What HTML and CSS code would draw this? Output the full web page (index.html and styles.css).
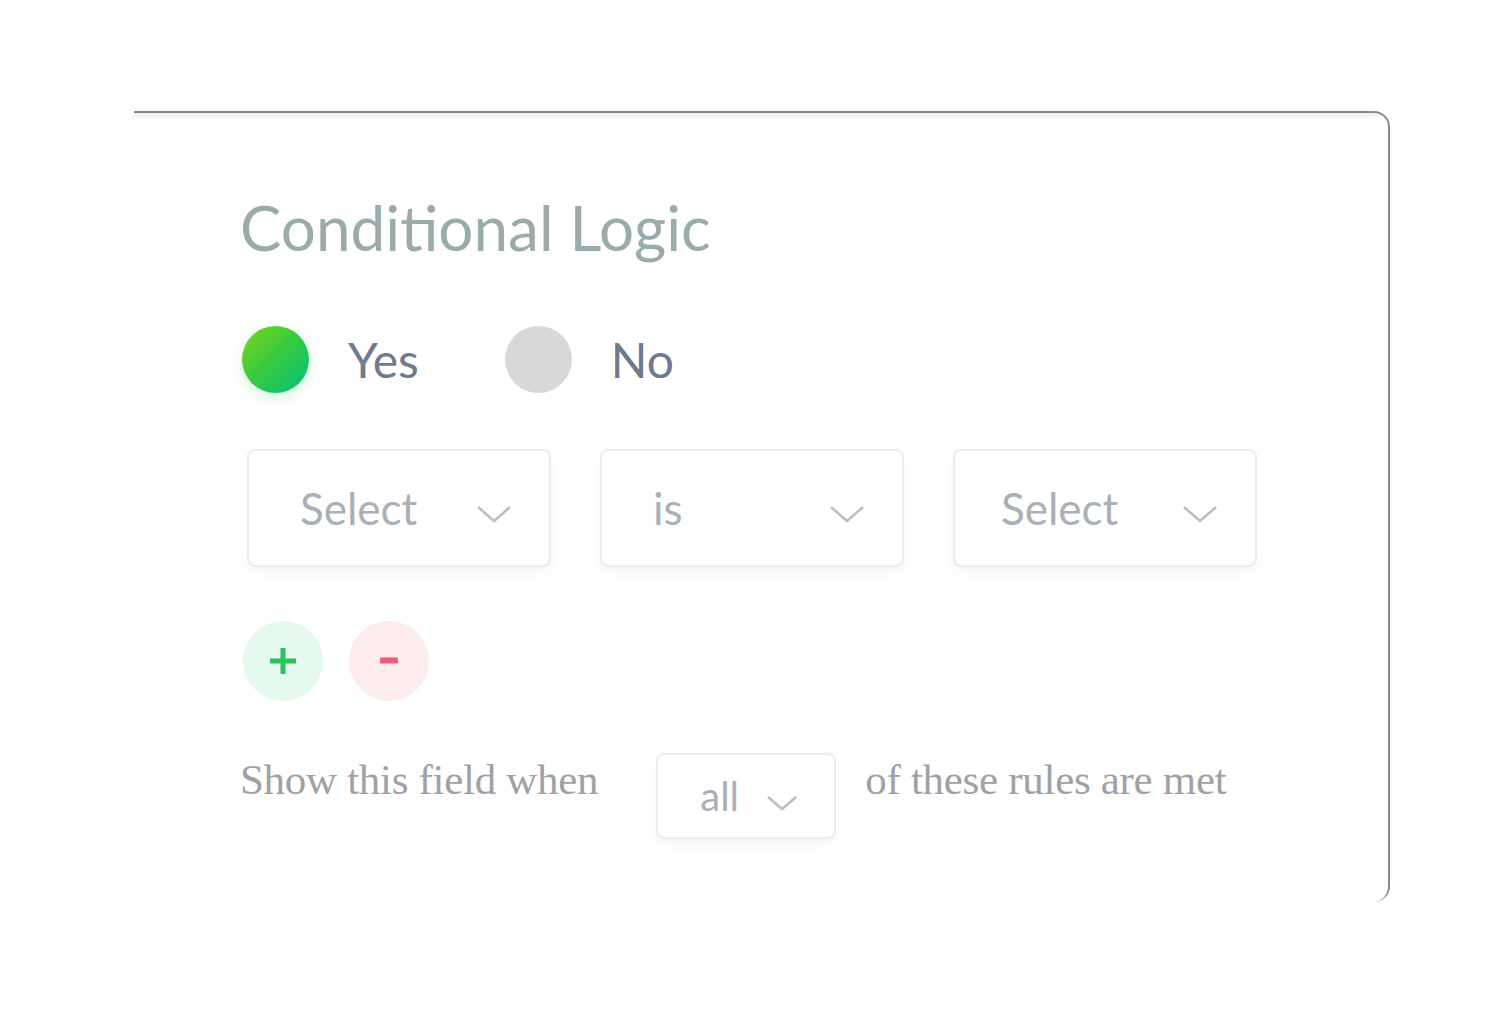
FILE: index.html
```html
<!DOCTYPE html>
<html lang="en">
<head>
    <meta charset="UTF-8">
    <meta name="viewport" content="width=device-width, initial-scale=1.0">
    <title>Conditional Logic</title>
    <link rel="stylesheet" href="styles.css">
</head>
<body>
    <div class="card">
        <h2 class="title">Conditional Logic</h2>

        <div class="radio-row">
            <label class="radio">
                <span class="dot dot-on"></span>
                <span class="radio-label">Yes</span>
            </label>
            <label class="radio">
                <span class="dot"></span>
                <span class="radio-label">No</span>
            </label>
        </div>

        <div class="rule-row">
            <div class="select">
                <span class="select-text">Select</span>
                <svg class="chevron" width="36" height="20" viewBox="0 0 36 20"><polyline points="2,3 18,17 34,3" fill="none" stroke="#b7bec5" stroke-width="2.5"/></svg>
            </div>
            <div class="select">
                <span class="select-text">is</span>
                <svg class="chevron" width="36" height="20" viewBox="0 0 36 20"><polyline points="2,3 18,17 34,3" fill="none" stroke="#b7bec5" stroke-width="2.5"/></svg>
            </div>
            <div class="select select-last">
                <span class="select-text">Select</span>
                <svg class="chevron" width="36" height="20" viewBox="0 0 36 20"><polyline points="2,3 18,17 34,3" fill="none" stroke="#b7bec5" stroke-width="2.5"/></svg>
            </div>
        </div>

        <div class="action-row">
            <button class="round add">
                <svg width="32" height="32" viewBox="0 0 32 32"><path d="M16 3v26M3 16h26" stroke="#27c35c" stroke-width="5"/></svg>
            </button>
            <button class="round remove">
                <svg width="18" height="8" viewBox="0 0 18 8"><rect x="0" y="0.5" width="18" height="6" rx="1" fill="#f05a73"/></svg>
            </button>
        </div>

        <div class="match-row">
            <span class="match-text">Show this field when</span>
            <div class="select select-small">
                <span class="select-text">all</span>
                <svg class="chevron" width="32" height="18" viewBox="0 0 32 18"><polyline points="2,3 16,15 30,3" fill="none" stroke="#b7bec5" stroke-width="2.5"/></svg>
            </div>
            <span class="match-text">of these rules are met</span>
        </div>
    </div>
</body>
</html>
```

FILE: styles.css
```css
body {
    margin: 0;
    background: white;
    font-family: Lato, "Open Sans", sans-serif;
}
.card {
    box-sizing: border-box;
    width: 1256px;
    margin: 111px 0 0 134px;
    padding: 83px 0 63px 106px;
    border-top: 2px solid #8a8a8a;
    border-right: 2px solid #8a8a8a;
    border-radius: 0 16px 16px 0;
    background: linear-gradient(to bottom, rgba(222, 233, 241, 0.7), white 7px);
}
.title {
    margin: 0;
    font-size: 62px;
    font-weight: normal;
    line-height: 1;
    color: #9aabab;
}
.radio-row {
    display: flex;
    align-items: center;
    gap: 86px;
    margin-top: 68px;
    padding-left: 2px;
}
.radio {
    display: flex;
    align-items: center;
    gap: 39px;
}
.dot {
    width: 67px;
    height: 67px;
    border-radius: 50%;
    background: #d8d8d8;
}
.dot-on {
    background: linear-gradient(135deg, #7fd41c 0%, #3ccb3e 45%, #00c07e 100%);
    box-shadow: 0 4px 14px rgba(40, 200, 90, 0.22);
}
.radio-label {
    font-size: 48px;
    line-height: 1;
    color: #6c7b92;
}
.rule-row {
    display: flex;
    gap: 49px;
    margin-top: 56px;
    padding-left: 7px;
}
.select {
    box-sizing: border-box;
    width: 304px;
    height: 118px;
    display: flex;
    align-items: center;
    justify-content: space-between;
    padding: 0 37px 0 51px;
    border: 2px solid #e8edf1;
    border-radius: 8px;
    background: white;
    box-shadow: 0 6px 14px rgba(0, 0, 0, 0.04);
}
.select-last {
    padding-left: 46px;
}
.select-text {
    font-size: 44px;
    line-height: 1;
    color: #a9b0b7;
}
.chevron {
    margin-top: 12px;
}
.action-row {
    display: flex;
    gap: 26px;
    margin-top: 54px;
    padding-left: 3px;
}
.round {
    width: 80px;
    height: 80px;
    border: none;
    border-radius: 50%;
    padding: 0;
    display: flex;
    align-items: center;
    justify-content: center;
    cursor: pointer;
}
.add {
    background: #e5f9ee;
}
.remove {
    background: #feebee;
}
.match-row {
    display: flex;
    align-items: flex-start;
    margin-top: 52px;
}
.match-text {
    margin-top: 5px;
    font-family: "Liberation Serif", serif;
    font-size: 43px;
    line-height: 1;
    letter-spacing: -0.3px;
    color: #9ea2a6;
}
.select-small {
    width: 180px;
    height: 86px;
    margin: 0 29px 0 58px;
    padding: 0 36px 0 42px;
}
.select-small .select-text {
    font-size: 40px;
}
.select-small .chevron {
    margin-top: 14px;
}
```
